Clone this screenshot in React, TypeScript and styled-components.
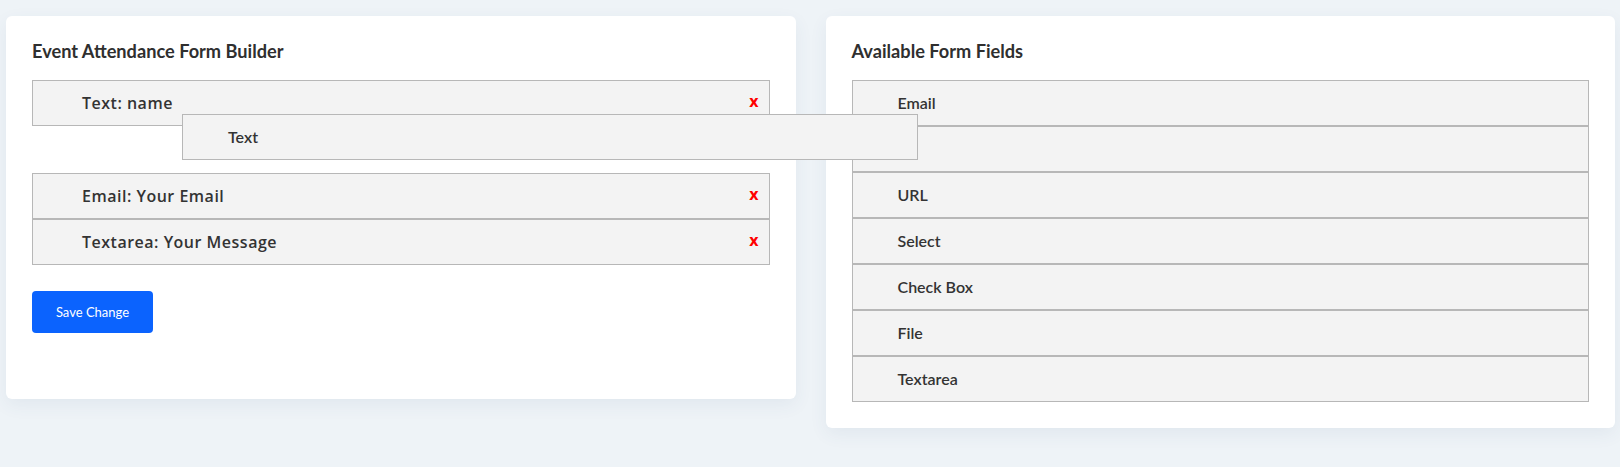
import React from 'react';
import styled, { createGlobalStyle } from 'styled-components';

const GlobalStyle = createGlobalStyle`
    html, body {
        margin: 0;
        padding: 0;
        background: #eef3f7;
    }
    * {
        box-sizing: border-box;
    }
`;

const Page = styled.div`
    position: relative;
    min-height: 467px;
    padding: 16px 5px 0 6px;
    display: grid;
    grid-template-columns: 1fr 1fr;
    column-gap: 30px;
    align-items: start;
    font-family: 'Lato', 'Liberation Sans', sans-serif;
    color: #333;
`;

const Card = styled.section<{ $extraBottom?: number }>`
    background: #fff;
    border-radius: 6px;
    box-shadow: 0 6px 18px rgba(60, 90, 130, 0.07);
    padding: 24px 26px ${(p) => 26 + (p.$extraBottom || 0)}px;
`;

const CardTitle = styled.h5`
    margin: 0 0 18px;
    font-family: 'Lato', sans-serif;
    font-size: 18.2px;
    font-weight: 700;
    line-height: 22px;
    color: #2f2f2f;
`;

const FieldList = styled.ul`
    list-style: none;
    margin: 0;
    padding: 0;
`;

const BuilderItem = styled.li`
    display: flex;
    align-items: center;
    justify-content: space-between;
    height: 46px;
    padding: 0 10px 0 49px;
    background: #f3f3f3;
    border: 1px solid #b7b7b7;
    font-family: 'Open Sans', sans-serif;
    font-size: 16px;
    font-weight: 600;
    letter-spacing: 0.5px;
    line-height: 20px;
    color: #333;
`;

const RemoveButton = styled.span`
    margin-bottom: 4px;
    font-family: 'Open Sans', sans-serif;
    font-size: 16px;
    font-weight: 700;
    letter-spacing: 0;
    line-height: 20px;
    color: #ff0000;
    cursor: pointer;
`;

const Placeholder = styled.li`
    height: 47px;
`;

const PaletteItem = styled.li`
    display: flex;
    align-items: center;
    height: 46px;
    padding: 0 10px 0 45px;
    background: #f3f3f3;
    border: 1px solid #b7b7b7;
    font-family: 'Lato', sans-serif;
    font-size: 16px;
    font-weight: 600;
    line-height: 20px;
    color: #333;
`;

const DragHelper = styled(PaletteItem)`
    position: absolute;
    left: 182px;
    top: 114px;
    width: 736px;
    list-style: none;
    z-index: 10;
`;

const SaveButton = styled.button`
    margin-top: 26px;
    width: 121px;
    height: 42px;
    border: none;
    border-radius: 4px;
    background: #0b63fe;
    color: #fff;
    font-family: 'Lato', sans-serif;
    font-size: 13px;
    font-weight: 400;
    cursor: pointer;
`;

const builderFields = ['Text: name', null, 'Email: Your Email', 'Textarea: Your Message'];

const availableFields = ['Email', '', 'URL', 'Select', 'Check Box', 'File', 'Textarea'];

const App = () => {
    return (
        <>
            <GlobalStyle />
            <Page>
                <Card $extraBottom={40}>
                    <CardTitle>Event Attendance Form Builder</CardTitle>
                    <FieldList>
                        {builderFields.map((f, i) =>
                            f === null ? (
                                <Placeholder key={i} />
                            ) : (
                                <BuilderItem key={i}>
                                    <span>{f}</span>
                                    <RemoveButton>x</RemoveButton>
                                </BuilderItem>
                            )
                        )}
                    </FieldList>
                    <SaveButton>Save Change</SaveButton>
                </Card>
                <Card>
                    <CardTitle>Available Form Fields</CardTitle>
                    <FieldList>
                        {availableFields.map((f, i) => (
                            <PaletteItem key={i}>{f}</PaletteItem>
                        ))}
                    </FieldList>
                </Card>
                <DragHelper as="div">Text</DragHelper>
            </Page>
        </>
    );
};

export default App;
